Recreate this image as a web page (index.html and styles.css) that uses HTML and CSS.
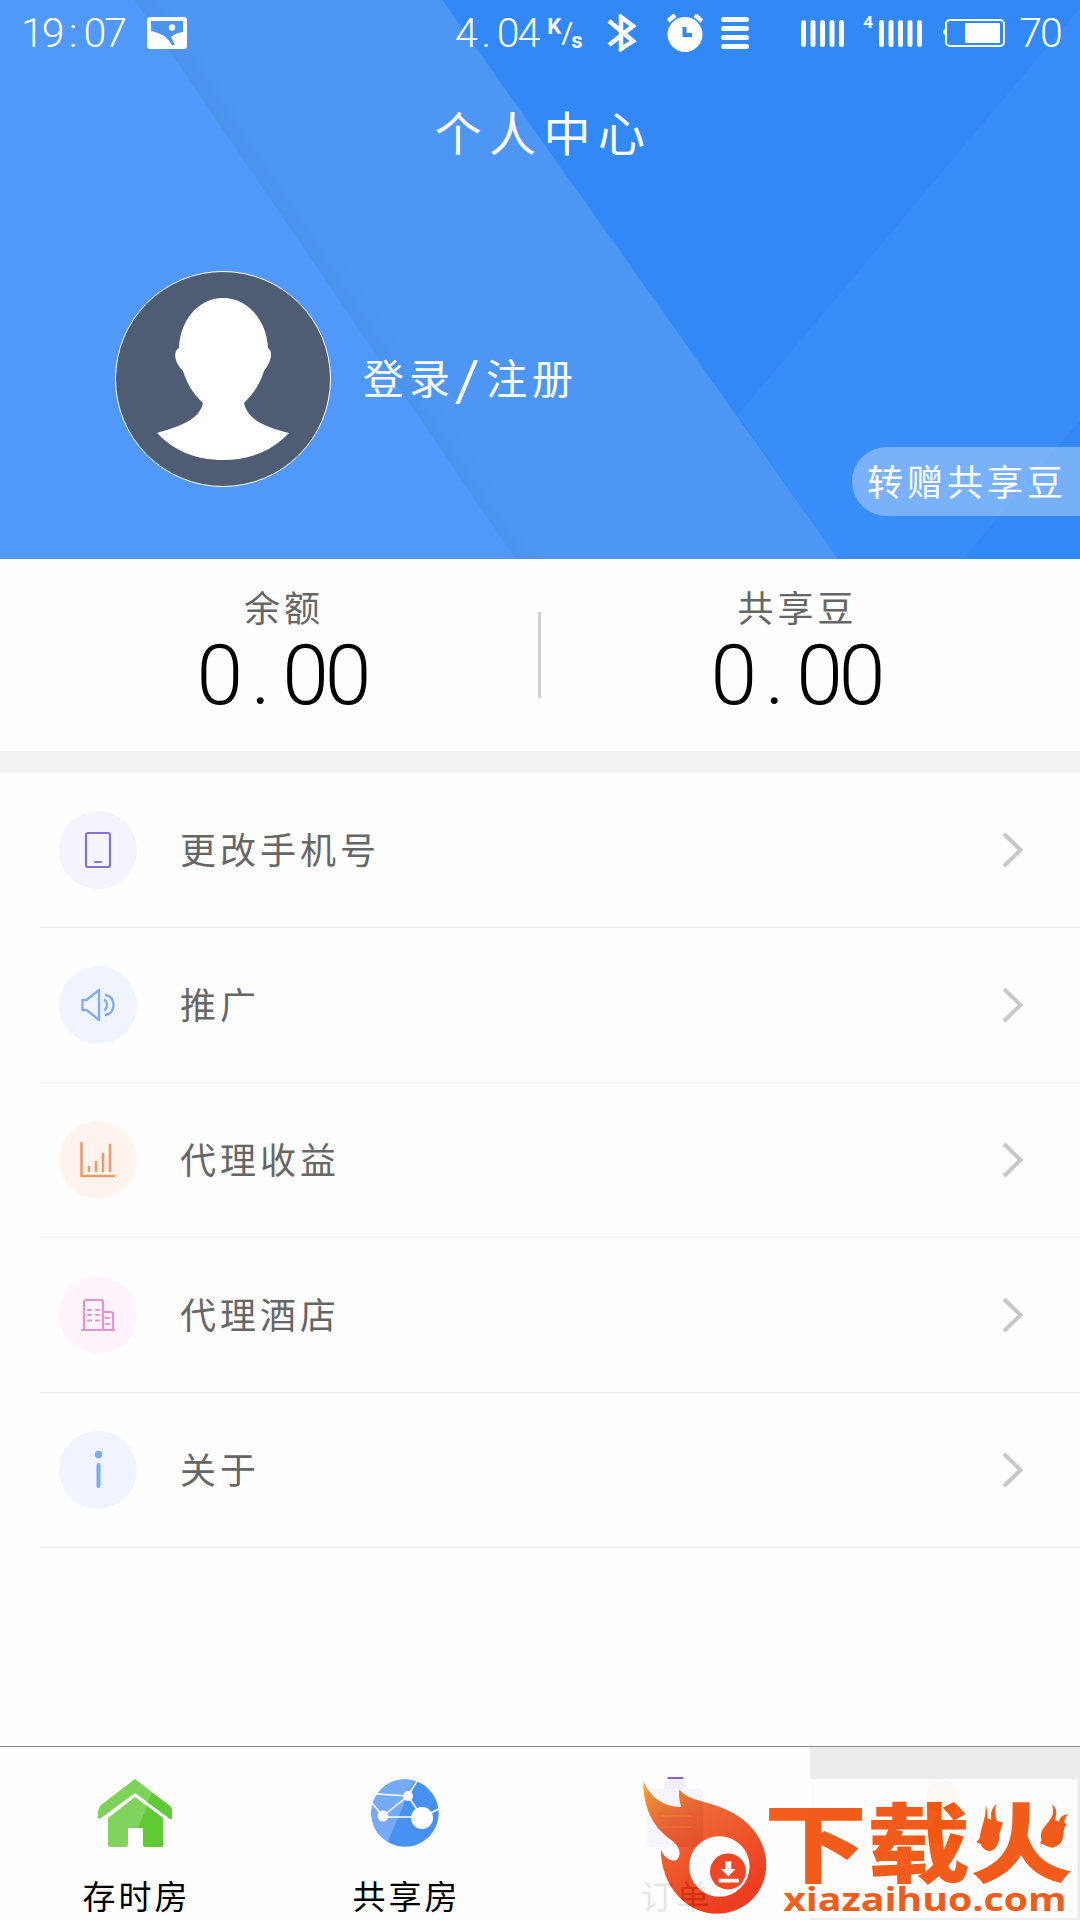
FILE: index.html
```html
<!DOCTYPE html>
<html lang="zh-CN">
<head>
<meta charset="utf-8">
<title>个人中心</title>
<link rel="stylesheet" href="styles.css">
</head>
<body>
<div class="screen">
  <header class="hero">
    <svg class="hero-bg" viewBox="0 0 1080 559" preserveAspectRatio="none" aria-hidden="true">
      <defs>
        <linearGradient id="fold" gradientUnits="userSpaceOnUse" x1="325" y1="280" x2="349" y2="264">
          <stop offset="0" stop-color="#4b93ec"/>
          <stop offset="1" stop-color="#4d96f3"/>
        </linearGradient>
      </defs>
      <path fill="#3289f6" d="M0 0H1080V559H0z"/>
      <path fill="#388df8" d="M1080 8V420L963 559H838L738 415z"/>
      <path fill="url(#fold)" d="M135 0H442L838 559H516z"/>
      <path fill="#5099fa" d="M0 0H135L516 559H0z"/>
    </svg>
    <div class="status">
      <span class="digits">19<i>:</i>07</span>
      <svg class="picture" width="40" height="32" viewBox="0 0 40 32"><path fill="#fff" fill-rule="evenodd" d="M3 0H37Q40 0 40 3V29Q40 32 37 32H3Q0 32 0 29V3Q0 0 3 0zM4 4V14Q18 16 25 28H28L24 20Q28 16 36 15V4z"/><circle cx="25" cy="10.500" r="3.200" fill="#fff"/></svg>
      <span class="digits speed">4<i>.</i>04</span>
      <span class="unit"><b>K</b><em>/</em><b>s</b></span>
      <svg class="bt" width="30" height="38" viewBox="0 0 30 38" fill="none" stroke="#fff" stroke-width="4.500"><path d="M2 7L26 27 14 35V3L26 12 2 31"/></svg>
      <svg class="alarm" width="36" height="38" viewBox="0 0 36 38"><circle cx="18" cy="20.500" r="17.500" fill="#fff"/><path d="M1 7L8 1M28 1L35 7" stroke="#fff" stroke-width="4.500"/><path d="M17.500 13V21H25" fill="none" stroke="#3289f6" stroke-width="4"/></svg>
      <svg class="lines" width="28" height="32" viewBox="0 0 28 32" stroke="#fff" stroke-width="5" stroke-linecap="round"><path d="M2.500 2.500H25.500M2.500 11.500H25.500M2.500 20.500H25.500M2.500 29.500H25.500"/></svg>
      <svg class="signal" width="44" height="27" viewBox="0 0 44 27" stroke="#fff" stroke-width="5" stroke-linecap="round"><path d="M2.500 2.500V24.500M12 2.500V24.500M21.500 2.500V24.500M31 2.500V24.500M40.500 2.500V24.500"/></svg>
      <b class="four">4</b>
      <svg class="signal2" width="44" height="27" viewBox="0 0 44 27" stroke="#fff" stroke-width="5" stroke-linecap="round"><path d="M2.500 2.500V24.500M12 2.500V24.500M21.500 2.500V24.500M31 2.500V24.500M40.500 2.500V24.500"/></svg>
      <svg class="battery" width="62" height="28" viewBox="0 0 62 28"><rect x="3" y="1" width="58" height="26" rx="4" fill="none" stroke="#fff" stroke-width="2"/><rect x="22" y="4" width="35" height="20" rx="1" fill="#fff"/><path d="M2 10V16Q0 15 0 13 0 11 2 10" fill="#fff"/></svg>
      <span class="digits">70</span>
    </div>
    <h1>个人中心</h1>
    <div class="profile">
      <svg class="avatar" width="216" height="216" viewBox="0 0 216 216">
        <circle cx="108" cy="108" r="107.500" fill="#4e5d73" stroke="#fff"/>
        <path fill="#fff" d="M108 27C134 27 152 51 153 77C158 80 157 90 149 100C145 114 137 124 129 132C133 150 152 156 174 162C157 180 135 189 108 189C80 189 58 179 42 162C62 156 84 150 88 132C79 124 72 113 68 100C59 91 58 80 64 77C65 50 83 27 108 27z"/>
      </svg>
      <span class="login">登录<i>/</i>注册</span>
    </div>
    <div class="gift">转赠共享豆</div>
  </header>

  <section class="stats">
    <div class="stat"><span>余额</span><strong>0<i>.</i>00</strong></div>
    <div class="rule"></div>
    <div class="stat"><span>共享豆</span><strong>0<i>.</i>00</strong></div>
  </section>

  <ul class="menu">
    <li>
      <svg class="ico" viewBox="0 0 78 78" fill="none" stroke="#8672d4" stroke-width="2.200" stroke-linecap="round"><circle cx="39" cy="39" r="39" fill="#f5f3fe" stroke="none"/><rect x="27" y="22" width="24" height="34" rx="2"/><path d="M36 51H42"/></svg>
      <span>更改手机号</span>
      <svg class="go" viewBox="0 0 22 36"><path d="M2 2L18.500 18 2 34"/></svg>
    </li>
    <li>
      <svg class="ico" viewBox="0 0 78 78" fill="none" stroke="#82aeec" stroke-width="2.400" stroke-linecap="round" stroke-linejoin="round"><circle cx="39" cy="39" r="39" fill="#eff4fe" stroke="none"/><path d="M23.500 34H27.500L40 24V54L27.500 44H23.500zM46 34Q50 39 46 44M47 29C57 32 57 46 47 49"/></svg>
      <span>推广</span>
      <svg class="go" viewBox="0 0 22 36"><path d="M2 2L18.500 18 2 34"/></svg>
    </li>
    <li>
      <svg class="ico" viewBox="0 0 78 78" fill="none" stroke="#ec9c6c" stroke-width="2.600" stroke-linecap="round"><circle cx="39" cy="39" r="39" fill="#fff4ed" stroke="none"/><path d="M22.500 22V55H55M30 46V50M37 41V50M44 33V50M51 24V50"/></svg>
      <span>代理收益</span>
      <svg class="go" viewBox="0 0 22 36"><path d="M2 2L18.500 18 2 34"/></svg>
    </li>
    <li>
      <svg class="ico" viewBox="0 0 78 78" fill="none" stroke="#e893cf" stroke-width="2.200" stroke-linecap="round"><circle cx="39" cy="39" r="39" fill="#fff4fd" stroke="none"/><path d="M23 54H55M25 54V26Q25 24 27 24H42Q44 24 44 26V54M44 36H52Q54 36 54 38V54M29 34H32M37 34H40M29 39H32M37 39H40M29 44.500H32M37 44.500H40M47 42H50M47 48H50"/></svg>
      <span>代理酒店</span>
      <svg class="go" viewBox="0 0 22 36"><path d="M2 2L18.500 18 2 34"/></svg>
    </li>
    <li>
      <svg class="ico" viewBox="0 0 78 78"><circle cx="39" cy="39" r="39" fill="#eff4fe"/><circle cx="39.500" cy="23.500" r="3.700" fill="#7dabee"/><path d="M39.500 34V55" stroke="#7dabee" stroke-width="4" stroke-linecap="round"/></svg>
      <span>关于</span>
      <svg class="go" viewBox="0 0 22 36"><path d="M2 2L18.500 18 2 34"/></svg>
    </li>
  </ul>

  <nav class="tabs">
    <div class="tab">
      <svg width="74" height="70" viewBox="0 0 74 70">
        <path fill="#7dd35a" d="M37 0L72 27Q74 29 74 33V39Q73 41 71 39L37 14 3 39Q0 41 0 38V33Q0 29 3 26z"/>
        <path fill="#5fca32" d="M54 14L72 27Q74 29 74 33V39Q73 41 71 39L49 23z"/>
        <path fill="#80d45e" d="M37 18L65 39V66Q65 68 63 68H48Q45 68 45 65V49H30V65Q30 68 27 68H12Q10 68 10 66V39z"/>
        <path fill="#5fca32" d="M49 27L65 39V66Q65 68 63 68H48Q45 68 45 65V49H40z"/>
      </svg>
      <span>存时房</span>
    </div>
    <div class="tab">
      <svg width="68" height="70" viewBox="0 0 68 70">
        <defs><clipPath id="ball"><circle cx="34" cy="34" r="33.700"/></clipPath></defs>
        <g clip-path="url(#ball)"><path fill="#4891f1" d="M0 0H68V68H0z"/><path fill="#74aaf6" d="M0 0H44L17 62 0 60z"/></g>
        <path d="M46 2L37 17 6 15M37 17L12 37 0 23M37 17L51 38 12 38M51 38L68 30" fill="none" stroke="#fff" stroke-width="1.600"/>
        <circle cx="37" cy="17" r="5" fill="#fff"/><circle cx="12" cy="37" r="5.500" fill="#fff"/><circle cx="51" cy="39" r="11" fill="#fff"/>
      </svg>
      <span>共享房</span>
    </div>
    <div class="tab">
      <svg width="56" height="70" viewBox="0 0 56 70"><path fill="#8b5ed0" d="M21 -2H36L40 10H17z"/><path fill="#a696ef" d="M5 10H51Q56 10 56 15V63Q56 68 51 68H5Q0 68 0 63V15Q0 10 5 10z"/><path d="M14 37H44M14 48H44" stroke="#fff" stroke-width="2"/></svg>
      <span>订单</span>
    </div>
    <div class="tab active">
      <svg width="66" height="70" viewBox="0 0 66 70"><circle cx="31" cy="18" r="16.500" fill="#f6b77a"/><path fill="#f6b77a" d="M0 64Q2 52 19 49L24 36H38L43 49Q60 52 62 64z"/></svg>
    </div>
    <div class="watermark">
      <svg width="441" height="139" viewBox="111 147 1323 418">
        <defs><linearGradient id="fire" x1="0" y1="0" x2=".55" y2="1"><stop offset="0" stop-color="#f5a21e"/><stop offset=".35" stop-color="#ee5a20"/><stop offset="1" stop-color="#ec2808"/></linearGradient></defs>
        <path fill="#fff" d="M111 147H1434V565H111z"/>
        <path fill="url(#fire)" d="M129 153C150 205 190 230 243 231C236 212 234 195 237 178C262 215 330 212 400 250C460 284 498 340 498 405C498 490 430 552 350 552C260 552 181 470 181 358C190 383 215 400 231 388C245 370 236 345 205 325C150 285 125 215 129 153z"/>
        <circle cx="357" cy="410" r="91" fill="#fff"/>
        <circle cx="383" cy="425" r="54" fill="#ec3410"/>
        <path fill="#fff" d="M375 395H393V418H406L384 440 362 418H375zM355 447H416V458H355z"/>
        <g fill="#f24d04">
          <path d="M1158 225C1168 255 1158 270 1173 284C1178 260 1166 245 1190 222C1180 255 1198 280 1199 322C1196 375 1144 377 1141 328C1139 300 1160 270 1158 225zM1358 223C1385 250 1358 265 1370 288C1385 280 1370 258 1405 253C1387 275 1398 290 1390 324C1383 363 1326 361 1324 320C1324 280 1372 278 1358 223z"/>
          <text class="site" x="549" y="544" textLength="852" lengthAdjust="spacingAndGlyphs">xiazaihuo.com</text>
        </g>
      </svg>
      <span class="brand">下载火</span>
    </div>
  </nav>
</div>
</body>
</html>
```
FILE: styles.css
```css
* { box-sizing: border-box; }
body {
  margin: 0;
  background: #fefefe;
  font-family: "Noto Sans CJK SC", sans-serif;
}
i, em { font-style: normal; }
svg { display: block; flex: none; }
.screen {
  width: 1080px;
  height: 1920px;
  display: flex;
  flex-direction: column;
  overflow: hidden;
}

/* header */
.hero { position: relative; height: 559px; color: #fff; }
.hero-bg { position: absolute; inset: 0; width: 100%; height: 100%; z-index: -1; }
.status {
  height: 66px;
  padding: 0 16px 0 21px;
  display: flex;
  align-items: center;
}
.digits {
  font: 300 41px/66px Roboto, sans-serif;
  letter-spacing: -2px;
  white-space: nowrap;
}
.digits i { display: inline-block; width: 21px; text-align: center; letter-spacing: 0; }
.picture { margin-left: 22px; }
.speed { margin-left: 268px; }
.unit { display: flex; width: 38px; height: 34px; margin-left: 9px; font: 22px/22px Roboto, sans-serif; }
.unit em { font-size: 29px; line-height: 34px; width: 10px; }
.unit b:last-child { align-self: flex-end; line-height: 18px; }
.bt { margin-left: 22px; }
.alarm { margin-left: 30px; }
.lines { margin-left: 18px; }
.signal { margin-left: 52px; }
.four { width: 10px; margin: -22px 6px 0 18px; font: bold 17px/17px Roboto, sans-serif; }
.battery { margin: 0 14px 0 20px; }
h1 {
  margin: 32px 0 0 7px;
  font-size: 47px;
  line-height: 66px;
  font-weight: 400;
  letter-spacing: 7.500px;
  text-align: center;
}
.profile { display: flex; align-items: center; margin: 107px 0 0 115px; }
.login { margin: -6px 0 0 32px; font-size: 41px; letter-spacing: 5px; }
.login i { display: inline-block; width: 31px; text-align: center; transform: scale(1.5, 1.1); }
.gift {
  position: absolute;
  right: 0;
  top: 447px;
  width: 228px;
  height: 69px;
  padding-left: 15px;
  border-radius: 35px 0 0 35px;
  background: rgba(255, 255, 255, .33);
  font-size: 36px;
  line-height: 66px;
  letter-spacing: 4px;
  white-space: nowrap;
}

/* balances */
.stats {
  height: 214px;
  padding: 0 27px 0 26px;
  display: flex;
  align-items: flex-start;
  border-bottom: 22px solid #f2f2f2;
}
.stat { flex: 1; display: flex; flex-direction: column; align-items: center; }
.stat span { margin-top: 22px; padding-left: 4px; font-size: 36px; line-height: 50px; letter-spacing: 4px; color: #666; }
.stat strong { font: 300 84px/90px Roboto, sans-serif; letter-spacing: -4px; color: #000; }
.stat strong i { display: inline-block; width: 43px; text-align: center; letter-spacing: 0; }
.stat:last-child strong { margin-left: -2px; }
.stat:last-child span { margin-left: -3px; }
.rule { width: 3px; height: 86px; margin-top: 53px; background: #d0d0d0; }

/* menu */
.menu { margin: 0; padding: 0 0 0 40px; list-style: none; flex: 1; }
.menu li {
  height: 155px;
  padding: 0 56px 0 19px;
  display: flex;
  align-items: center;
  border-bottom: 1px solid #ececec;
}
.ico { width: 78px; height: 78px; }
.menu span { flex: 1; margin: -5px 0 0 43px; font-size: 36px; letter-spacing: 4px; color: #666; }
.go { width: 22px; height: 36px; fill: none; stroke: #c8c8cb; stroke-width: 4; }

/* bottom tabs */
.tabs {
  position: relative;
  height: 174px;
  display: grid;
  grid-template-columns: repeat(4, 1fr);
  border-top: 1px solid #888;
}
.tab { display: flex; flex-direction: column; align-items: center; padding-top: 32px; }
.tab svg { overflow: visible; }
.tab > span { margin-top: 21px; padding-left: 3px; font-size: 33px; line-height: 50px; letter-spacing: 3px; }
.active { background: #ececec; }
.watermark { position: absolute; left: 637px; top: 32px; opacity: .9; }
.brand {
  position: absolute;
  left: 127px;
  top: 19px;
  font-size: 103px;
  font-weight: 900;
  line-height: 98px;
  white-space: nowrap;
  color: #f24d04;
  transform: scaleY(.84);
  transform-origin: top;
}
.site { font: 700 96px "Open Sans", sans-serif; }
```
